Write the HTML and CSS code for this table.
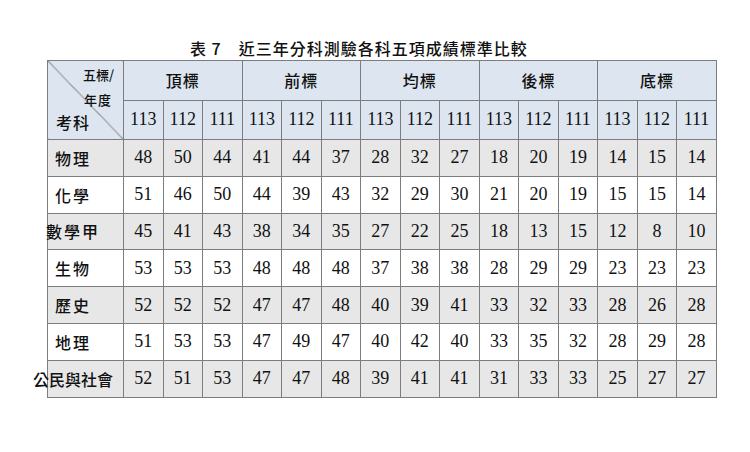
FILE: index.html
```html
<!DOCTYPE html>
<html lang="zh-Hant">
<head>
<meta charset="utf-8">
<link rel="stylesheet" href="styles.css">
</head>
<body>
<div class="page">
  <div class="title">表 7　近三年分科測驗各科五項成績標準比較</div>
  <table class="grid">
    <colgroup>
      <col class="c-first">
      <col><col><col><col><col><col><col><col><col><col><col><col><col><col><col>
    </colgroup>
    <thead>
      <tr class="h1">
        <th rowspan="2" class="corner">
          <div class="corner-in">
            <span class="ct1">五標/</span>
            <span class="ct2">年度</span>
            <span class="ct3">考科</span>
          </div>
        </th>
        <th colspan="3" class="grp">頂標</th>
        <th colspan="3" class="grp">前標</th>
        <th colspan="3" class="grp">均標</th>
        <th colspan="3" class="grp">後標</th>
        <th colspan="3" class="grp">底標</th>
      </tr>
      <tr class="h2">
        <th>113</th><th>112</th><th>111</th>
        <th>113</th><th>112</th><th>111</th>
        <th>113</th><th>112</th><th>111</th>
        <th>113</th><th>112</th><th>111</th>
        <th>113</th><th>112</th><th>111</th>
      </tr>
    </thead>
    <tbody>
      <tr class="gray">
        <td class="lab"><div class="lab-in">物理</div></td>
        <td>48</td><td>50</td><td>44</td><td>41</td><td>44</td><td>37</td><td>28</td><td>32</td><td>27</td><td>18</td><td>20</td><td>19</td><td>14</td><td>15</td><td>14</td>
      </tr>
      <tr>
        <td class="lab"><div class="lab-in">化學</div></td>
        <td>51</td><td>46</td><td>50</td><td>44</td><td>39</td><td>43</td><td>32</td><td>29</td><td>30</td><td>21</td><td>20</td><td>19</td><td>15</td><td>15</td><td>14</td>
      </tr>
      <tr class="gray">
        <td class="lab"><div class="lab-in">數學甲</div></td>
        <td>45</td><td>41</td><td>43</td><td>38</td><td>34</td><td>35</td><td>27</td><td>22</td><td>25</td><td>18</td><td>13</td><td>15</td><td>12</td><td>8</td><td>10</td>
      </tr>
      <tr>
        <td class="lab"><div class="lab-in">生物</div></td>
        <td>53</td><td>53</td><td>53</td><td>48</td><td>48</td><td>48</td><td>37</td><td>38</td><td>38</td><td>28</td><td>29</td><td>29</td><td>23</td><td>23</td><td>23</td>
      </tr>
      <tr class="gray">
        <td class="lab"><div class="lab-in">歷史</div></td>
        <td>52</td><td>52</td><td>52</td><td>47</td><td>47</td><td>48</td><td>40</td><td>39</td><td>41</td><td>33</td><td>32</td><td>33</td><td>28</td><td>26</td><td>28</td>
      </tr>
      <tr>
        <td class="lab"><div class="lab-in">地理</div></td>
        <td>51</td><td>53</td><td>53</td><td>47</td><td>49</td><td>47</td><td>40</td><td>42</td><td>40</td><td>33</td><td>35</td><td>32</td><td>28</td><td>29</td><td>28</td>
      </tr>
      <tr class="gray">
        <td class="lab"><div class="lab-in wide">公民與社會</div></td>
        <td>52</td><td>51</td><td>53</td><td>47</td><td>47</td><td>48</td><td>39</td><td>41</td><td>41</td><td>31</td><td>33</td><td>33</td><td>25</td><td>27</td><td>27</td>
      </tr>
    </tbody>
  </table>
</div>
</body>
</html>
```
FILE: styles.css
```css
html, body {
  margin: 0;
  padding: 0;
  background: #ffffff;
}

.page {
  padding: 38px 0 0 47px;
  font-family: "Noto Sans CJK TC", "Noto Sans CJK SC", sans-serif;
  color: #111;
}

.title {
  padding-left: 143px;
  height: 20px;
  line-height: 20px;
  margin-bottom: 2px;
  font-size: 16px;
  font-weight: 500;
  letter-spacing: 1px;
  white-space: nowrap;
}

.grid {
  border-collapse: collapse;
  table-layout: fixed;
  width: 669px;
}

.grid col {
  width: 39.53px;
}

.grid col.c-first {
  width: 76px;
}

.grid th,
.grid td {
  border: 1px solid #7d7d7d;
  padding: 0;
  text-align: center;
  vertical-align: middle;
}

.grid thead th {
  background: #dde6f0;
  font-weight: 500;
}

.h1 {
  height: 39px;
}

.h2 {
  height: 39px;
}

.grp {
  font-size: 16px;
  letter-spacing: 1px;
}

.h2 th {
  font-family: "Liberation Serif", "Times New Roman", serif;
  font-size: 18px;
  font-weight: normal;
}

.corner {
  background: linear-gradient(to top right, transparent calc(50% - 0.6px), #555 50%, transparent calc(50% + 0.6px)), #dde6f0 !important;
}

.corner-in {
  display: flex;
  flex-direction: column;
  height: 78px;
  box-sizing: border-box;
  padding: 5px 0 0 0;
}

.ct1 {
  align-self: flex-end;
  font-size: 13px;
  line-height: 18px;
  padding-right: 9px;
  font-weight: 500;
}

.ct2 {
  align-self: flex-end;
  font-size: 13px;
  line-height: 18px;
  margin-top: 7px;
  padding-right: 11px;
  letter-spacing: 1px;
  font-weight: 500;
}

.ct3 {
  align-self: flex-start;
  font-size: 16px;
  line-height: 20px;
  margin-top: 3px;
  padding-left: 8px;
  letter-spacing: 1px;
  font-weight: 500;
}

.grid tbody tr {
  height: 36.8px;
}

.grid tbody tr.gray td {
  background: #e7e7e7;
}

.grid tbody td {
  font-family: "Liberation Serif", "Times New Roman", serif;
  font-size: 18px;
}

.grid tbody td.lab {
  font-family: "Noto Sans CJK TC", "Noto Sans CJK SC", sans-serif;
  font-size: 16px;
  font-weight: 500;
}

.lab-in {
  display: flex;
  justify-content: center;
  padding-right: 25px;
  letter-spacing: 2px;
  white-space: nowrap;
}

.lab-in.wide {
  letter-spacing: 0;
}
```
